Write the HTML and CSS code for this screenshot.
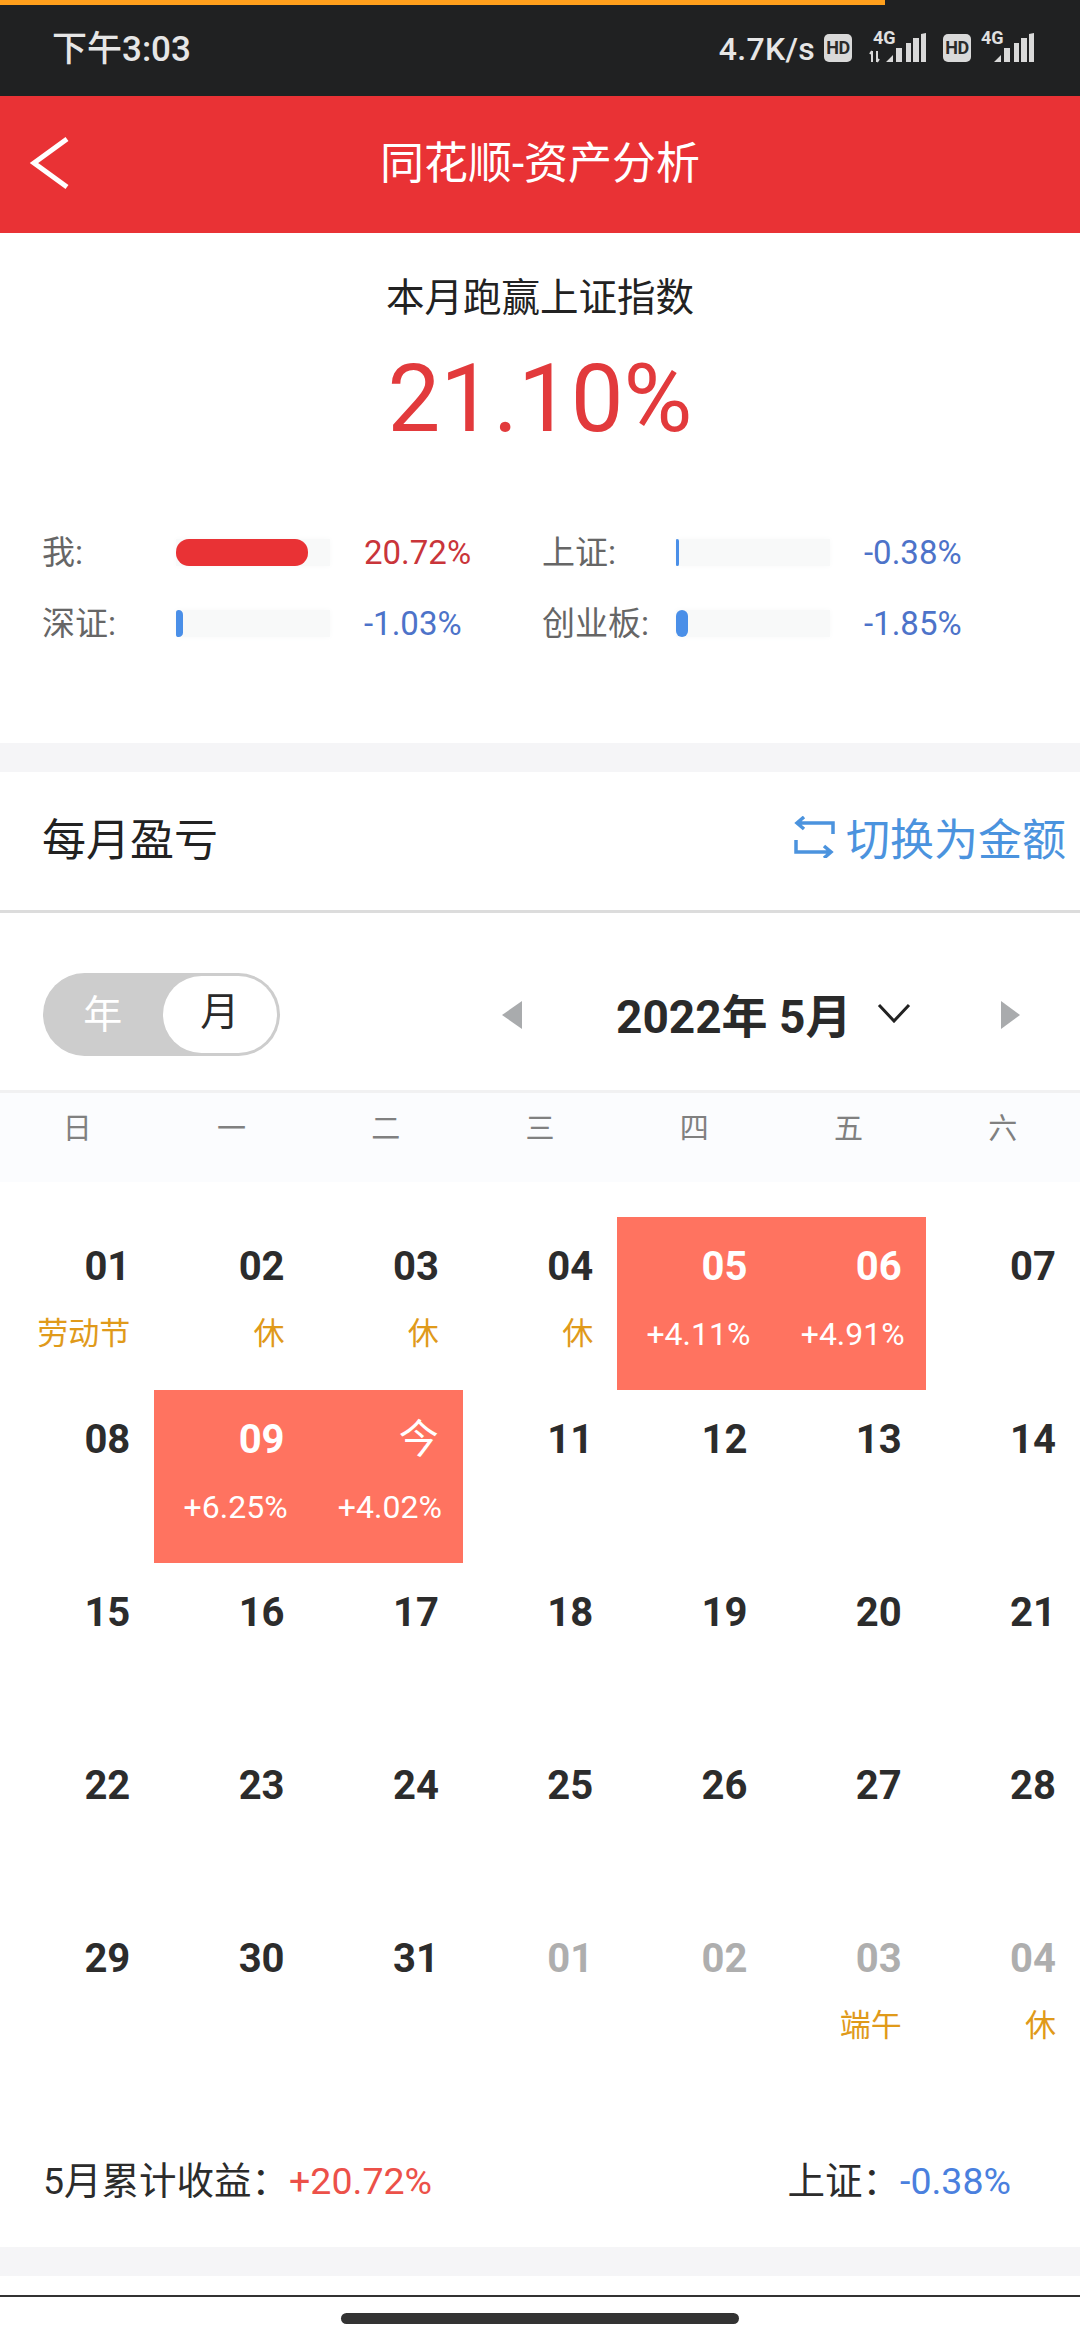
FILE: index.html
```html
<!DOCTYPE html>
<html lang="zh">
<head>
<meta charset="utf-8">
<title>同花顺-资产分析</title>
<link rel="stylesheet" href="styles.css">
</head>
<body>
<div class="page">
  <div class="status">
    <div class="progress"></div>
    <div class="time">下午3:03</div>
    <div class="status-right">
      <span class="speed">4.7K/s</span>
      <span class="hd">HD</span>
      <svg class="sig first" width="58" height="40" viewBox="0 0 58 40">
        <text x="4" y="16" class="g4">4G</text>
        <path d="M3 34V23M1 26l2-3M8 23v11M10 31l-2 3" class="updown"/>
        <path d="M17 34l7-7v7zM27 34V20h6v14zM37 34V15h5v19zM44 34V10h6v24zM52 34V6l5-1v29z" class="bars"/>
      </svg>
      <span class="hd second">HD</span>
      <svg class="sig" width="54" height="40" viewBox="0 0 54 40">
        <text x="0" y="16" class="g4">4G</text>
        <path d="M13 34l7-7v7zM23 34V20h6v14zM33 34V15h5v19zM40 34V10h6v24zM48 34V6l5-1v29z" class="bars"/>
      </svg>
    </div>
  </div>

  <header class="nav">
    <svg class="back" width="42" height="54" viewBox="0 0 42 54"><polyline points="38,3 5,27 38,51"/></svg>
    <h1>同花顺-资产分析</h1>
  </header>

  <section class="summary">
    <div class="summary-title">本月跑赢上证指数</div>
    <div class="summary-num">21.10%</div>
    <div class="stats">
      <div class="stat">
        <span class="stat-label">我:</span>
        <span class="track"><i class="fill red w-me"></i></span>
        <span class="stat-val red-text">20.72%</span>
      </div>
      <div class="stat">
        <span class="stat-label">上证:</span>
        <span class="track"><i class="fill w-sh"></i></span>
        <span class="stat-val blue-text">-0.38%</span>
      </div>
      <div class="stat">
        <span class="stat-label">深证:</span>
        <span class="track"><i class="fill w-sz"></i></span>
        <span class="stat-val blue-text">-1.03%</span>
      </div>
      <div class="stat">
        <span class="stat-label">创业板:</span>
        <span class="track"><i class="fill w-cy"></i></span>
        <span class="stat-val blue-text">-1.85%</span>
      </div>
    </div>
  </section>

  <div class="gap"></div>

  <section class="monthly">
    <div class="monthly-head">
      <div class="monthly-title">每月盈亏</div>
      <div class="switch">
        <svg width="42" height="42" viewBox="0 0 42 42">
          <path d="M3 7h36v11M10 1L3 7l7 6M2 24v12h35M30 30l7 6-7 6"/>
        </svg>
        <span>切换为金额</span>
      </div>
    </div>

    <div class="controls">
      <div class="toggle">
        <span class="opt">年</span>
        <span class="opt on">月</span>
      </div>
      <div class="month-nav">
        <span class="tri left"></span>
        <div class="month-label">2022年 5月</div>
        <svg class="chev" width="34" height="20" viewBox="0 0 34 20"><polyline points="2,2 17,18 32,2"/></svg>
        <span class="tri right"></span>
      </div>
    </div>

    <div class="weekdays">
      <span>日</span><span>一</span><span>二</span><span>三</span><span>四</span><span>五</span><span>六</span>
    </div>

    <div class="cal">
      <div class="cell"><b>01</b><small class="hol">劳动节</small></div>
      <div class="cell"><b>02</b><small class="hol">休</small></div>
      <div class="cell"><b>03</b><small class="hol">休</small></div>
      <div class="cell"><b>04</b><small class="hol">休</small></div>
      <div class="cell hot"><b>05</b><small>+4.11%</small></div>
      <div class="cell hot"><b>06</b><small>+4.91%</small></div>
      <div class="cell"><b>07</b></div>

      <div class="cell"><b>08</b></div>
      <div class="cell hot"><b>09</b><small>+6.25%</small></div>
      <div class="cell hot"><b class="today">今</b><small>+4.02%</small></div>
      <div class="cell"><b>11</b></div>
      <div class="cell"><b>12</b></div>
      <div class="cell"><b>13</b></div>
      <div class="cell"><b>14</b></div>

      <div class="cell"><b>15</b></div>
      <div class="cell"><b>16</b></div>
      <div class="cell"><b>17</b></div>
      <div class="cell"><b>18</b></div>
      <div class="cell"><b>19</b></div>
      <div class="cell"><b>20</b></div>
      <div class="cell"><b>21</b></div>

      <div class="cell"><b>22</b></div>
      <div class="cell"><b>23</b></div>
      <div class="cell"><b>24</b></div>
      <div class="cell"><b>25</b></div>
      <div class="cell"><b>26</b></div>
      <div class="cell"><b>27</b></div>
      <div class="cell"><b>28</b></div>

      <div class="cell"><b>29</b></div>
      <div class="cell"><b>30</b></div>
      <div class="cell"><b>31</b></div>
      <div class="cell off"><b>01</b></div>
      <div class="cell off"><b>02</b></div>
      <div class="cell off"><b>03</b><small class="hol">端午</small></div>
      <div class="cell off"><b>04</b><small class="hol">休</small></div>
    </div>

    <div class="totals">
      <div>5月累计收益：<span class="t-red">+20.72%</span></div>
      <div class="t-right">上证：<span class="t-blue">-0.38%</span></div>
    </div>
  </section>

  <div class="gap gap-bottom"></div>

  <footer class="home">
    <div class="home-bar"></div>
  </footer>
</div>
</body>
</html>
```

FILE: styles.css
```css
* { box-sizing: border-box; margin: 0; padding: 0; }
html, body { background: #fff; }
body {
  width: 1080px;
  height: 2340px;
  overflow: hidden;
  font-family: Roboto, "Noto Sans CJK SC", sans-serif;
  color: #2a2a2a;
}
.page { display: flex; flex-direction: column; width: 1080px; height: 2340px; }

/* status bar */
.status {
  position: relative;
  height: 96px;
  flex: none;
  background: #202122;
  color: #e6e6e6;
  display: flex;
  align-items: center;
  justify-content: space-between;
  padding: 0 45px 0 52px;
}
.progress { position: absolute; left: 0; top: 0; width: 885px; height: 5px; background: #ff9f1c; }
.time { font-size: 35px; font-weight: 500; line-height: 40px; margin-top: 3px; }
.status-right { display: flex; align-items: center; height: 40px; }
.speed { font-size: 32px; font-weight: 500; letter-spacing: .3px; margin-right: 9px; margin-top: 1px; }
.hd {
  width: 28px; height: 28px;
  border-radius: 5px;
  background: #d9d9d9;
  color: #2a2a2a;
  font-size: 18px;
  font-weight: 700;
  line-height: 28px;
  text-align: center;
  letter-spacing: -.5px;
}
.hd.second { margin-left: 16px; }
.sig { display: block; margin-left: 10px; }
.sig.first { margin-left: 17px; }
.g4 { font-family: Roboto, sans-serif; font-size: 18px; font-weight: 700; fill: #e0e0e0; }
.bars { fill: #d9d9d9; }
.updown { fill: none; stroke: #d9d9d9; stroke-width: 2; }

/* nav */
.nav {
  height: 137px;
  flex: none;
  background: #e93235;
  display: flex;
  align-items: center;
  justify-content: center;
  position: relative;
}
.nav h1 { font-size: 44px; font-weight: 400; color: #fff; line-height: 56px; margin-top: -2px; }
.back { position: absolute; left: 29px; top: 40px; }
.back polyline { fill: none; stroke: #fff; stroke-width: 5; }

/* summary */
.summary { height: 510px; flex: none; padding-top: 37px; }
.summary-title { font-size: 38.500px; line-height: 56px; text-align: center; color: #222; }
.summary-num {
  font-size: 94px;
  line-height: 110px;
  text-align: center;
  color: #e23a3c;
  margin-top: 18px;
}
.stats {
  display: grid;
  grid-template-columns: 500px 500px;
  row-gap: 44px;
  padding-left: 42px;
  margin-top: 85px;
}
.stat { display: flex; align-items: center; height: 27px; }
.stat-label { width: 134px; font-size: 33px; color: #666; line-height: 27px; white-space: nowrap; }
.track { width: 154px; height: 27px; background: #f8f9f9; box-shadow: 0 0 6px #f8f9f9; display: block; }
.fill { display: block; height: 27px; background: #4a8fe8; border-radius: 3px 5px 5px 3px; }
.fill.red { background: #e93235; border-radius: 13px; }
.w-me { width: 132px; }
.w-sh { width: 3px; }
.w-sz { width: 7px; }
.w-cy { width: 12px; border-radius: 6px; }
.stat-val { margin-left: 34px; font-size: 33px; line-height: 27px; }
.red-text { color: #c9353a; }
.blue-text { color: #4d73c9; }

.gap { height: 29px; flex: none; background: #f5f5f7; }

/* monthly */
.monthly { flex: none; height: 1475px; display: flex; flex-direction: column; }
.monthly-head {
  height: 141px;
  flex: none;
  border-bottom: 3px solid #dcdcdc;
  display: flex;
  align-items: center;
  justify-content: space-between;
  padding: 0 14px 8px 42px;
}
.monthly-title { font-size: 44px; color: #222; }
.switch { display: flex; align-items: center; gap: 10px; color: #4b93de; font-size: 44px; }
.switch svg { fill: none; stroke: #4b93de; stroke-width: 3.500; }

.controls {
  height: 177px;
  flex: none;
  display: flex;
  align-items: center;
  padding-left: 43px;
  padding-top: 26px;
}
.toggle {
  width: 237px;
  height: 83px;
  border-radius: 42px;
  background: #cdcdcd;
  display: flex;
  align-items: center;
  padding: 3px;
}
.opt { width: 115px; text-align: center; font-size: 39px; color: #fff; padding-bottom: 8px; }
.opt.on {
  width: 116px;
  height: 77px;
  border-radius: 39px;
  background: #fff;
  color: #2a2a2a;
  line-height: 72px;
  padding: 0;
  margin-left: 3px;
}
.month-nav { display: flex; align-items: center; margin-left: 222px; }
.tri { width: 0; height: 0; border-style: solid; border-width: 14px 0; border-color: transparent; }
.tri.left { border-right: 20px solid #a9abad; }
.tri.right { border-left: 19px solid #a9abad; margin-left: 90px; }
.month-label { font-size: 46px; font-weight: 700; color: #2a2a2a; margin-left: 94px; white-space: nowrap; margin-top: -4px; }
.chev { margin-left: 26px; margin-top: -4px; }
.chev polyline { fill: none; stroke: #222; stroke-width: 3; }

.weekdays {
  height: 92px;
  flex: none;
  background: #fbfcfe;
  border-top: 3px solid #f1f1f2;
  display: grid;
  grid-template-columns: repeat(7, 1fr);
  align-items: center;
  text-align: center;
  color: #808080;
  font-size: 29px;
  padding-bottom: 23px;
}

.cal {
  display: grid;
  grid-template-columns: repeat(7, 1fr);
  grid-auto-rows: 173px;
  margin-top: 35px;
  flex: none;
}
.cell {
  display: flex;
  flex-direction: column;
  align-items: flex-end;
  padding: 26px 24px 0 0;
}
.cell b { font-size: 40px; font-weight: 700; line-height: 48px; color: #2c2c2c; }
.cell small { font-size: 32px; line-height: 40px; margin-top: 23px; margin-right: -3px; }
.cell small.hol { font-size: 31px; color: #e09a1a; margin-right: 0; }
.cell.hot { background: #ff7360; }
.cell.hot b { color: #fff; }
.cell.hot b.today { font-weight: 400; }
.cell.hot small { color: #fff; }
.cell.off b { color: #aeaeae; }

.totals {
  display: flex;
  justify-content: space-between;
  padding: 0 69px 0 43px;
  margin-top: 74px;
  font-size: 37.500px;
  line-height: 50px;
  color: #2c2c2c;
}
.t-red { color: #ec5149; }
.t-blue { color: #4a80de; }

.home {
  flex: none;
  margin-top: 19px;
  border-top: 2px solid #333;
  height: 45px;
  display: flex;
  justify-content: center;
  padding-top: 16px;
}
.home-bar { width: 398px; height: 11px; border-radius: 6px; background: #333; }
```
